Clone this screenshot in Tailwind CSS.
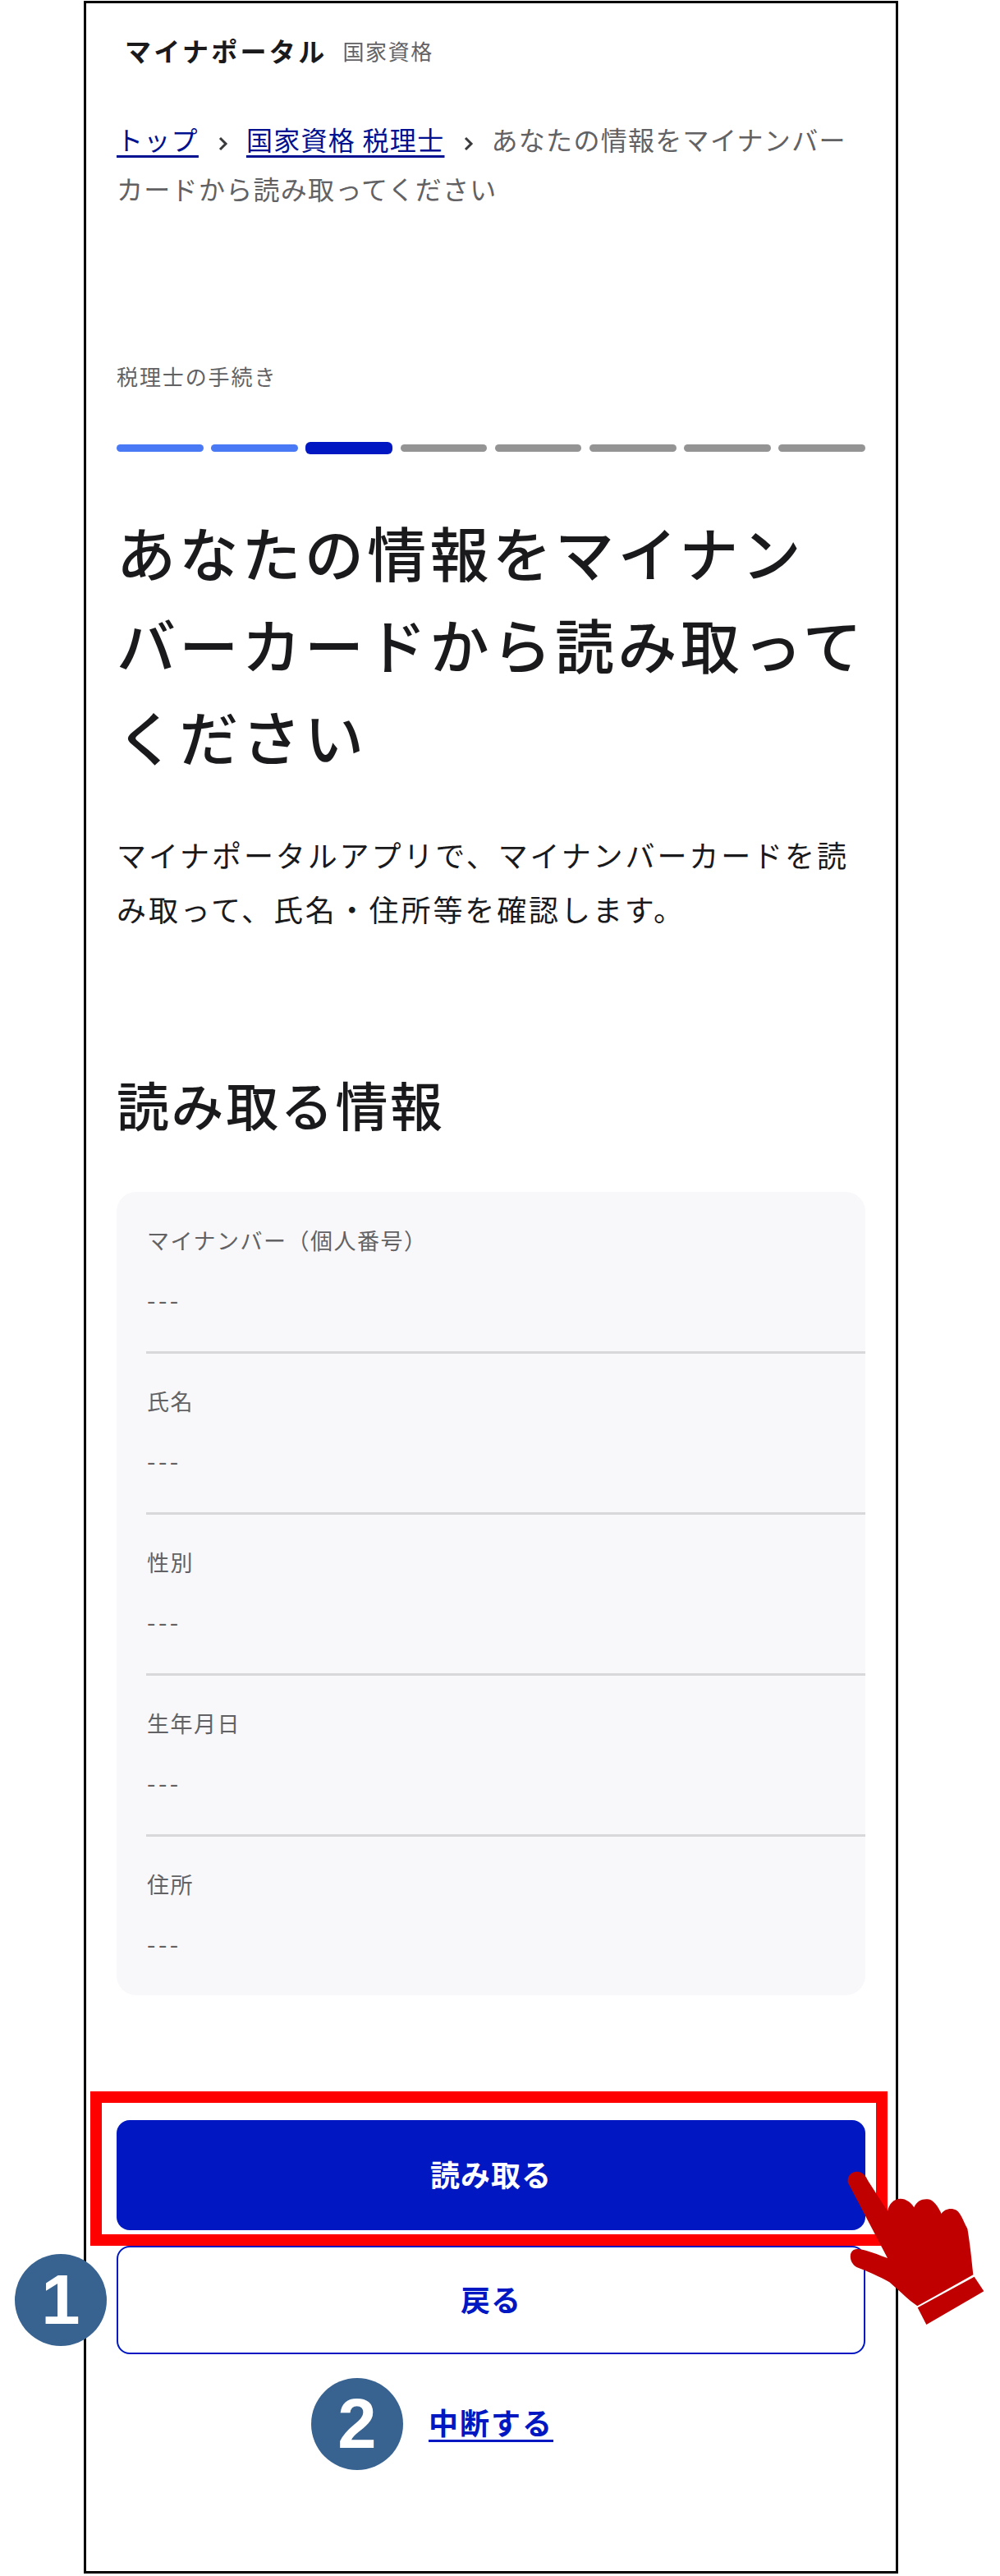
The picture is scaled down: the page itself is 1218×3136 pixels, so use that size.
<!DOCTYPE html>
<html lang="ja">
<head>
  <meta charset="UTF-8">
  <meta name="viewport" content="width=device-width, initial-scale=1.0">
  <title>マイナポータル 国家資格</title>
  <script src="https://cdn.jsdelivr.net/npm/@tailwindcss/browser@4"></script>
</head>
<body class="relative bg-white h-[3136px] w-[1218px] overflow-hidden font-['Noto_Sans_CJK_JP','Noto_Sans',sans-serif]">
  <!-- Phone frame -->
  <div class="ml-[102px] mt-[1px] w-[992px] h-[3132px] border-[3px] border-black pl-[37px] pr-[37px]">
    <!-- Header -->
    <header class="flex items-center gap-[19px] h-[116px] pl-[10px] pb-[2px]">
      <span class="text-[32px] font-bold tracking-[3.3px] text-[#1a1a1c]">マイナポータル</span>
      <span class="text-[26px] tracking-[1.6px] text-[#626264]">国家資格</span>
    </header>

    <!-- Breadcrumb -->
    <nav class="text-[32px] leading-[60px] tracking-[1.3px] text-[#626264] mt-[19px]">
      <a class="text-[#00118f] underline underline-offset-[6px]">トップ</a><svg class="inline-block w-[12px] h-[18px] ml-[24px] mr-[22px] align-[-1px]" viewBox="0 0 12 18" fill="none" stroke="#3a3a3c" stroke-width="3"><path d="M2 2l7 7-7 7"/></svg><a class="text-[#00118f] underline underline-offset-[6px]">国家資格 税理士</a><svg class="inline-block w-[12px] h-[18px] ml-[24px] mr-[21px] align-[-1px]" viewBox="0 0 12 18" fill="none" stroke="#3a3a3c" stroke-width="3"><path d="M2 2l7 7-7 7"/></svg>あなたの情報をマイナンバーカードから読み取ってください
    </nav>

    <!-- Progress -->
    <p class="text-[26px] leading-[40px] tracking-[1.9px] text-[#626264] mt-[179px]">税理士の手続き</p>
    <div class="flex items-center gap-[9.5px] h-[16px] mt-[59px]">
      <div class="flex-1 h-[9px] rounded-full bg-[#4979f5]"></div>
      <div class="flex-1 h-[9px] rounded-full bg-[#4979f5]"></div>
      <div class="flex-1 h-[15px] rounded-[6px] bg-[#0017c1]"></div>
      <div class="flex-1 h-[9px] rounded-full bg-[#949494]"></div>
      <div class="flex-1 h-[9px] rounded-full bg-[#949494]"></div>
      <div class="flex-1 h-[9px] rounded-full bg-[#949494]"></div>
      <div class="flex-1 h-[9px] rounded-full bg-[#949494]"></div>
      <div class="flex-1 h-[9px] rounded-full bg-[#949494]"></div>
    </div>

    <!-- Title -->
    <h1 class="text-[72px] leading-[112px] tracking-[4.3px] font-medium text-[#1a1a1c] mt-[62px]">あなたの情報をマイナン<br>バーカードから読み取って<br>ください</h1>
    <p class="text-[36px] leading-[66px] tracking-[2.9px] text-[#1a1a1c] mt-[56px]">マイナポータルアプリで、マイナンバーカードを読み取って、氏名・住所等を確認します。</p>
    <h2 class="text-[64px] leading-[96px] tracking-[2.6px] font-medium text-[#1a1a1c] mt-[156px]">読み取る情報</h2>

    <!-- Read fields -->
    <div class="mt-[60px] h-[978px] rounded-[24px] bg-[#f8f8fb] pl-[36px] pt-[1px]">
      <div class="h-[196px] border-b-[3px] border-[#d8d8db] pt-[38px] pl-[1px]">
        <div class="text-[27px] leading-[40px] tracking-[1.5px] text-[#626264]">マイナンバー（個人番号）</div>
        <div class="text-[30px] leading-[40px] tracking-[3.5px] text-[#626264] mt-[31px]">---</div>
      </div>
      <div class="h-[196px] border-b-[3px] border-[#d8d8db] pt-[38px] pl-[1px]">
        <div class="text-[27px] leading-[40px] tracking-[1.5px] text-[#626264]">氏名</div>
        <div class="text-[30px] leading-[40px] tracking-[3.5px] text-[#626264] mt-[31px]">---</div>
      </div>
      <div class="h-[196px] border-b-[3px] border-[#d8d8db] pt-[38px] pl-[1px]">
        <div class="text-[27px] leading-[40px] tracking-[1.5px] text-[#626264]">性別</div>
        <div class="text-[30px] leading-[40px] tracking-[3.5px] text-[#626264] mt-[31px]">---</div>
      </div>
      <div class="h-[196px] border-b-[3px] border-[#d8d8db] pt-[38px] pl-[1px]">
        <div class="text-[27px] leading-[40px] tracking-[1.5px] text-[#626264]">生年月日</div>
        <div class="text-[30px] leading-[40px] tracking-[3.5px] text-[#626264] mt-[31px]">---</div>
      </div>
      <div class="h-[190px] pt-[38px] pl-[1px]">
        <div class="text-[27px] leading-[40px] tracking-[1.5px] text-[#626264]">住所</div>
        <div class="text-[30px] leading-[40px] tracking-[3.5px] text-[#626264] mt-[31px]">---</div>
      </div>
    </div>

    <!-- Buttons -->
    <button class="block w-full h-[134px] mt-[152px] pb-[4px] rounded-[16px] bg-[#0017c1] text-white text-[36px] font-bold tracking-[1px]">読み取る</button>
    <button class="block w-full h-[132px] mt-[19px] pb-[4px] rounded-[16px] border-2 border-[#0017c1] bg-white text-[#0017c1] text-[36px] font-bold tracking-[1px]">戻る</button>
    <div class="text-center mt-[52px]">
      <a class="text-[36px] leading-[60px] font-bold tracking-[2px] text-[#0017c1] underline underline-offset-[6px]">中断する</a>
    </div>
  </div>

  <!-- Annotations over the screen -->
  <div class="absolute left-[110px] top-[2546px] w-[971px] h-[188px] border-[14px] border-[#ff0000]"></div>
  <div class="absolute left-[18px] top-[2744px] w-[112px] h-[112px] rounded-full bg-[#386290] flex items-center justify-center text-white text-[85px] font-bold font-['Liberation_Sans',sans-serif]">1</div>
  <div class="absolute left-[379px] top-[2895px] w-[112px] h-[112px] rounded-full bg-[#386290] flex items-center justify-center text-white text-[85px] font-bold font-['Liberation_Sans',sans-serif]">2</div>
  <svg class="absolute left-[1000px] top-[2600px] w-[218px] h-[260px]" viewBox="0 0 654 780" fill="#c00000">
    <path d="M98 170C95 145 115 128 138 132C155 135 165 150 172 165L243 275C248 250 265 230 290 230C312 230 330 245 340 262C350 238 370 230 390 232C412 234 428 260 440 285C450 268 475 262 495 272C510 282 520 310 535 340C545 400 550 450 556 508L352 622C320 600 290 570 250 535C215 515 170 495 130 480C105 465 100 430 118 418C135 408 160 415 243 447Z"/>
    <path d="M560 515L595 568L385 690L353 628Z"/>
  </svg>
</body>
</html>
